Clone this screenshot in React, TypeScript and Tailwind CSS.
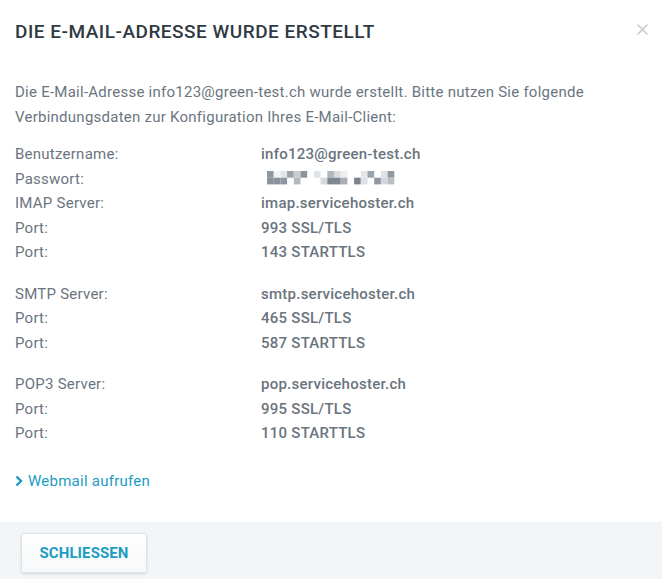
import React from "react";

type Row = { label: string; value: string; secret?: boolean };

const groups: Row[][] = [
  [
    { label: "Benutzername:", value: "info123@green-test.ch" },
    { label: "Passwort:", value: "", secret: true },
    { label: "IMAP Server:", value: "imap.servicehoster.ch" },
    { label: "Port:", value: "993 SSL/TLS" },
    { label: "Port:", value: "143 STARTTLS" },
  ],
  [
    { label: "SMTP Server:", value: "smtp.servicehoster.ch" },
    { label: "Port:", value: "465 SSL/TLS" },
    { label: "Port:", value: "587 STARTTLS" },
  ],
  [
    { label: "POP3 Server:", value: "pop.servicehoster.ch" },
    { label: "Port:", value: "995 SSL/TLS" },
    { label: "Port:", value: "110 STARTTLS" },
  ],
];

// pixelated password blocks: [col, row, colour]
const blocks: [number, number, string][] = [
  [0, 0, "#8d969e"], [1, 0, "#f0f2f4"], [2, 0, "#e3e6e9"], [3, 0, "#9aa2aa"], [4, 0, "#c9ced3"], [5, 0, "#8c959d"],
  [0, 1, "#8a939b"], [1, 1, "#8a939b"], [2, 1, "#8d969e"], [4, 1, "#b3b9bf"],
  [7, 0, "#e1e4e7"], [9, 0, "#b1b8be"], [10, 0, "#d9dde0"], [11, 0, "#eceef0"],
  [8, 1, "#d5d9dd"], [9, 1, "#7f8891"], [10, 1, "#7f8891"], [11, 1, "#a7aeb4"],
  [14, 0, "#e4e7ea"], [15, 0, "#9aa2aa"], [17, 0, "#dfe2e5"], [18, 0, "#8f98a0"],
  [13, 1, "#7a848d"], [14, 1, "#dde1e4"], [16, 1, "#8f98a0"], [17, 1, "#d3d7db"], [18, 1, "#b8bec4"],
];

function Pixelated() {
  return (
    <svg width="130" height="14" viewBox="0 0 130 14" className="block mt-[4px] ml-[6px]">
      {blocks.map(([c, r, fill], i) => (
        <rect key={i} x={c * 6.7} y={r * 6.7} width="6.7" height="6.7" fill={fill} />
      ))}
    </svg>
  );
}

export default function App() {
  return (
    <div
      className="w-[662px] h-[579px] bg-white flex flex-col text-[#6b7580]"
      style={{ fontFamily: "Roboto, 'Noto Sans', sans-serif" }}
    >
      <div className="flex items-start justify-between pl-[15px] pr-[14px] pt-[18px]">
        <h1 className="text-[19px] leading-[28px] font-medium text-[#2f3a43] tracking-[0.5px]">
          DIE E-MAIL-ADRESSE WURDE ERSTELLT
        </h1>
        <button className="mt-[6px] text-[#c6cacd]">
          <svg width="11" height="11" viewBox="0 0 11 11" className="block">
            <path d="M1 1 L10 10 M10 1 L1 10" stroke="currentColor" strokeWidth="1.6" strokeLinecap="round" />
          </svg>
        </button>
      </div>

      <div className="flex-1 px-[15px] pt-[34px] text-[15px] tracking-[0.25px]">
        <p className="leading-[25px]">
          Die E-Mail-Adresse info123@green-test.ch wurde erstellt. Bitte nutzen Sie folgende
          <br />
          Verbindungsdaten zur Konfiguration Ihres E-Mail-Client:
        </p>

        <div className="mt-[12px] flex flex-col gap-[17px]">
          {groups.map((g, gi) => (
            <div key={gi} className="flex flex-col">
              {g.map((r, ri) => (
                <div key={ri} className="flex leading-[24.5px]">
                  <span className="w-[246px] shrink-0">{r.label}</span>
                  {r.secret ? (
                    <Pixelated />
                  ) : (
                    <span className="font-medium text-[#6a747e]">{r.value}</span>
                  )}
                </div>
              ))}
            </div>
          ))}
        </div>

        <a className="mt-[23px] flex items-center gap-[5px] text-[#1b9cc2] leading-[24px] cursor-pointer">
          <svg width="8" height="12" viewBox="0 0 8 12" className="block">
            <path d="M1.5 1.5 L6 6 L1.5 10.5" fill="none" stroke="currentColor" strokeWidth="2.4" />
          </svg>
          <span>Webmail aufrufen</span>
        </a>
      </div>

      <div className="h-[57px] bg-[#f3f6f9] pl-[21px] pt-[11px]">
        <button className="h-[40px] w-[126px] bg-gradient-to-b from-white to-[#f7f8f9] border border-[#dfe3e6] rounded-[3px] shadow-sm text-[15px] font-bold text-[#1b9cc2] tracking-[0.1px]">
          SCHLIESSEN
        </button>
      </div>
    </div>
  );
}
